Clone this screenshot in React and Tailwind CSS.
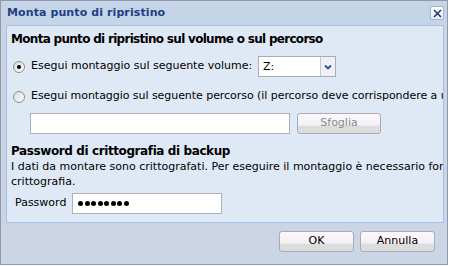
import React from 'react';

const FONT = { fontFamily: '"DejaVu Sans", Verdana, sans-serif' };

function Radio({ checked }) {
  return (
    <span className="flex h-[12px] w-[12px] shrink-0 items-center justify-center rounded-full border border-[#8b8f96] bg-gradient-to-br from-[#d8d8d8] to-white">
      {checked ? <span className="h-[4px] w-[4px] rounded-full bg-black" /> : null}
    </span>
  );
}

function DialogButton({ children, disabled }) {
  return (
    <div
      className={[
        'flex h-[21px] items-center justify-center rounded-[3px] border border-[#a9acb4] bg-[linear-gradient(#fbf8fb_0%,#f3eff3_60%,#dcdcdc_62%,#dcdcdc_100%)] text-[11px]',
        disabled ? 'text-[#8a8a8a]' : 'text-black',
      ].join(' ')}
    >
      {children}
    </div>
  );
}

export default function App() {
  return (
    <div className="h-[266px] w-[450px] bg-white" style={FONT}>
      <div className="flex h-[265px] w-[448px] flex-col border border-[#8e99aa] bg-[#cbd5e6]">
        <div className="flex h-[24px] shrink-0 items-center justify-between bg-[#c5d4e6] pl-[6px] pr-[3px]">
          <span className="text-[11px] font-bold tracking-[0.1px] text-[#1e3f86]">
            Monta punto di ripristino
          </span>
          <span className="flex h-[14px] w-[14px] items-center justify-center rounded-[2px] border border-[#9fb4d6] bg-gradient-to-b from-white to-[#e6eef9]">
            <svg width="9" height="9" viewBox="0 0 9 9">
              <path d="M1 1L8 8M8 1L1 8" stroke="#1d3a7a" strokeWidth="1.6" />
            </svg>
          </span>
        </div>

        <div className="ml-[5px] mr-[3px] h-[198px] shrink-0 overflow-hidden border border-[#a4c0ec] bg-[#dfe9f5] pl-[4px] text-[11px] text-black">
          <h1 className="mt-[5px] h-[16px] whitespace-nowrap text-[12px] font-bold leading-[16px] tracking-[-0.7px]">
            Monta punto di ripristino sul volume o sul percorso
          </h1>

          <div className="mt-[9px] flex h-[21px] items-center">
            <span className="ml-[2px]">
              <Radio checked />
            </span>
            <span className="ml-[6px] w-[226px] whitespace-nowrap">
              Esegui montaggio sul seguente volume:
            </span>
            <div className="ml-[1px] flex h-[21px] w-[78px] border border-[#a7acb5] bg-white">
              <span className="flex-1 pl-[4px] leading-[19px]">Z:</span>
              <span className="flex w-[15px] items-center justify-center border-l border-[#c4c8d0] bg-[#eef1f7]">
                <svg width="8" height="6" viewBox="0 0 8 6">
                  <path d="M1 1.5L4 4.5L7 1.5" fill="none" stroke="#2d4f94" strokeWidth="1.8" />
                </svg>
              </span>
            </div>
          </div>

          <div className="mt-[12px] flex h-[15px] items-center">
            <span className="ml-[2px]">
              <Radio />
            </span>
            <span className="ml-[6px] whitespace-nowrap tracking-[-0.05px]">
              Esegui montaggio sul seguente percorso (il percorso deve corrispondere a un
            </span>
          </div>

          <div className="mt-[9px] flex h-[21px] items-center">
            <div className="ml-[19px] h-[21px] w-[260px] border border-[#abb1ba] bg-white" />
            <div className="ml-[7px] w-[84px]">
              <DialogButton disabled>Sfoglia</DialogButton>
            </div>
          </div>

          <h2 className="mt-[10px] h-[15px] whitespace-nowrap text-[12px] font-bold leading-[15px] tracking-[-0.4px]">
            Password di crittografia di backup
          </h2>
          <p className="h-[30px] whitespace-pre leading-[15px]">
            {'I dati da montare sono crittografati. Per eseguire il montaggio è necessario fornire la password di\ncrittografia.'}
          </p>

          <div className="mt-[4px] flex h-[21px] items-center">
            <span className="ml-[4px] w-[57px]">Password</span>
            <div className="flex h-[21px] w-[150px] items-center gap-[1.5px] border border-[#abb1ba] bg-white pl-[5px]">
              {Array.from({ length: 8 }).map((_, i) => (
                <span key={i} className="h-[5px] w-[5px] rounded-full bg-black" />
              ))}
            </div>
          </div>
        </div>

        <div className="flex justify-end gap-[6px] pr-[12px] pt-[8px]">
          <div className="w-[75px]">
            <DialogButton>OK</DialogButton>
          </div>
          <div className="w-[75px]">
            <DialogButton>Annulla</DialogButton>
          </div>
        </div>
      </div>
    </div>
  );
}
